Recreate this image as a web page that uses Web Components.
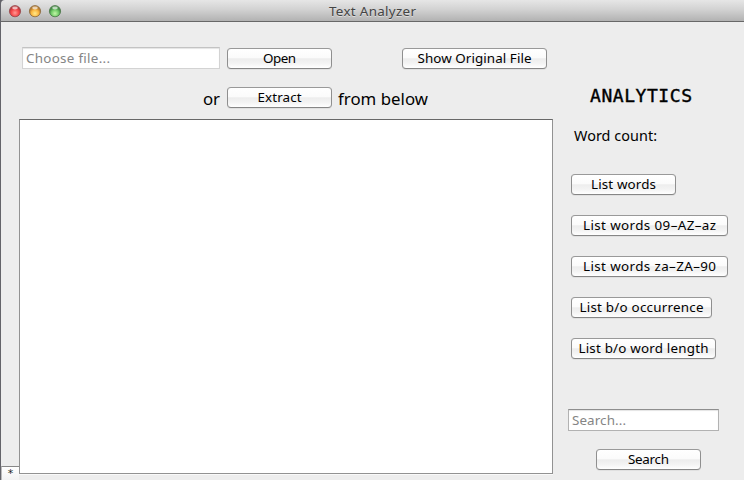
<!DOCTYPE html>
<html lang="en"><head><meta charset="utf-8"><title>Text Analyzer</title>
<style>html,body{margin:0;width:744px;height:480px;overflow:hidden;background:#ededed}</style></head>
<body><analyzer-window></analyzer-window>
<script>
const define=(name,html,setup)=>customElements.define(name,class extends HTMLElement{
 connectedCallback(){ if(this.shadowRoot)return; this.attachShadow({mode:'open'}).innerHTML=html; if(setup)setup(this,this.shadowRoot); }
});
// A single line of text tracked to the width given by its "w" attribute.
define('fit-text',`<style>:host{display:block;white-space:nowrap;flex:none}span{display:inline-block}</style><span></span>`,(el,root)=>{
 const s=root.querySelector('span'); s.textContent=el.getAttribute('text');
 const w=+el.getAttribute('w'), n=s.textContent.length;
 if(w&&n>1){ const gap=(w-s.getBoundingClientRect().width)/(n-1); s.style.letterSpacing=gap+'px'; s.style.marginRight=-gap+'px'; }
});
define('push-button',`<style>
:host{display:block;box-sizing:border-box;height:21px;flex:none;border:1px solid #8f8f8f;border-top-color:#999;border-bottom-color:#868686;border-radius:4px;background:linear-gradient(#fff 0,#fbfbfb 45%,#ededed 52%,#f3f3f3 75%,#fff 100%);box-shadow:0 1px 0 #e0e0e0;color:#000;font:13.4px/19px "Noto Sans","Open Sans",sans-serif}
div{display:flex;justify-content:center}</style><div></div>`,(el,root)=>{
 el.style.width=el.getAttribute('width')+'px';
 const t=document.createElement('fit-text'); t.setAttribute('text',el.getAttribute('label')); t.setAttribute('w',el.getAttribute('w'));
 root.querySelector('div').append(t);
});
define('text-input',`<style>
:host{display:block;box-sizing:border-box;height:22px;flex:none;background:#fff;border:1px solid var(--edge,#d3d3d3);border-top-color:var(--top,#c3c3c3);box-shadow:inset 0 1px 1px #e4e4e4;padding-left:3px;color:#858585;font:13.4px/20px "Noto Sans","Open Sans",sans-serif}
</style><slot></slot>`);
define('title-bar',`<style>
:host{display:grid;grid-template-columns:1fr auto 1fr;align-items:center;box-sizing:border-box;height:22px;border-bottom:1px solid #686868;border-radius:4px 0 0 0;background:linear-gradient(#e6e6e6,#d2d2d2 45%,#b2b2b2);color:#444;font:13.4px/20px "Noto Sans","Open Sans",sans-serif;text-shadow:0 1px 0 #dedede}
svg{display:block;margin-left:7px}</style>
<svg width="56" height="16" viewBox="0 0 56 16"><defs>
<radialGradient id="r" cx=".5" cy=".65"><stop stop-color="#ff9a94"/><stop offset=".65" stop-color="#f64a4c"/><stop offset="1" stop-color="#c2393d"/></radialGradient>
<radialGradient id="y" cx=".5" cy=".7"><stop stop-color="#ffe98a"/><stop offset=".65" stop-color="#fbb740"/><stop offset="1" stop-color="#bd8030"/></radialGradient>
<radialGradient id="g" cx=".5" cy=".7"><stop stop-color="#c2f5a6"/><stop offset=".65" stop-color="#72cc69"/><stop offset="1" stop-color="#489048"/></radialGradient></defs>
<g stroke-width=".8"><circle cx="7" cy="8.2" r="5.6" fill="url(#r)" stroke="#92474b"/><circle cx="27" cy="8.2" r="5.6" fill="url(#y)" stroke="#86673e"/><circle cx="47" cy="8.2" r="5.6" fill="url(#g)" stroke="#4a7448"/></g>
<g fill="#fff" opacity=".65"><ellipse cx="7" cy="5" rx="2.8" ry="1.4"/><ellipse cx="27" cy="5" rx="2.8" ry="1.4"/><ellipse cx="47" cy="5" rx="2.8" ry="1.4"/></g></svg>
<fit-text text="Text Analyzer" w="87"></fit-text><span></span>`);
define('file-controls',`<style>
:host{display:block;height:97px;color:#000;font:16.8px/22px "Noto Sans","Open Sans",sans-serif}
.row{display:flex;align-items:flex-start}.one{padding:25px 0 0 3px;height:40px;box-sizing:content-box}
.one push-button{margin:1px 0 0 7px}.one push-button+push-button{margin-left:70px}
.two{padding-left:184px}.two push-button{margin:0 6px 0 7px}.two>fit-text{padding-top:1px}
text-input{width:198px}</style>
<div class="row one"><text-input><fit-text text="Choose file..." w="84"></fit-text></text-input><push-button width="105" label="Open" w="33"></push-button><push-button width="145" label="Show Original File" w="114"></push-button></div>
<div class="row two"><fit-text text="or" w="17"></fit-text><push-button width="105" label="Extract" w="44"></push-button><fit-text text="from below" w="90"></fit-text></div>`);
define('text-pane',`<style>:host{display:block;box-sizing:border-box;height:355px;background:#fff;border:1px solid #929292;border-top-color:#686868;box-shadow:0 1px 0 #f9f9f9}</style>`);
define('analytics-panel',`<style>
:host{display:flex;flex-direction:column;align-items:flex-start;color:#000;font:14.4px/20px "Noto Sans","Open Sans",sans-serif}
.heading{margin:62px 0 0 37px;font:18px/24px "DejaVu Sans Mono",monospace;color:#000;-webkit-text-stroke:.4px #000}
.count{margin:18px 0 0 21px}
.buttons{display:flex;flex-direction:column;gap:20px;margin:28px 0 0 18px}
text-input{width:151px;margin:50px 0 18px 15px;--edge:#b2b2b2;--top:#8e8e8e}.search{margin-left:43px}</style>
<fit-text class="heading" text="ANALYTICS" w="102"></fit-text>
<fit-text class="count" text="Word count:" w="83"></fit-text>
<div class="buttons"><push-button width="105" label="List words" w="65"></push-button><push-button width="157" label="List words 09–AZ–az" w="133"></push-button><push-button width="157" label="List words za–ZA–90" w="133"></push-button><push-button width="141" label="List b/o occurrence" w="124"></push-button><push-button width="145" label="List b/o word length" w="130"></push-button></div>
<text-input><fit-text text="Search..." w="54"></fit-text></text-input><push-button class="search" width="105" label="Search" w="41"></push-button>`);
define('corner-tab',`<style>:host{display:block;box-sizing:border-box;width:18px;height:14px;border-top:1px solid #888;border-left:1px solid #bbb;background:linear-gradient(#fff,#f2f2f2);color:#222;font:11px/13px "DejaVu Sans",sans-serif;text-align:center}</style><slot></slot>`);
define('analyzer-window',`<style>
:host{display:flex;flex-direction:column;box-sizing:border-box;width:744px;height:480px;border-left:1px solid #64646a;background:linear-gradient(#64646a 0 5px,#ededed 5px)}
main{display:grid;grid-template-columns:18px 534px 1fr;height:458px;background:#ededed}
.gutter{display:flex;align-items:flex-end}</style>
<title-bar></title-bar><main><div class="gutter"><corner-tab>*</corner-tab></div><section><file-controls></file-controls><text-pane></text-pane></section><analytics-panel></analytics-panel></main>`);
</script></body></html>
